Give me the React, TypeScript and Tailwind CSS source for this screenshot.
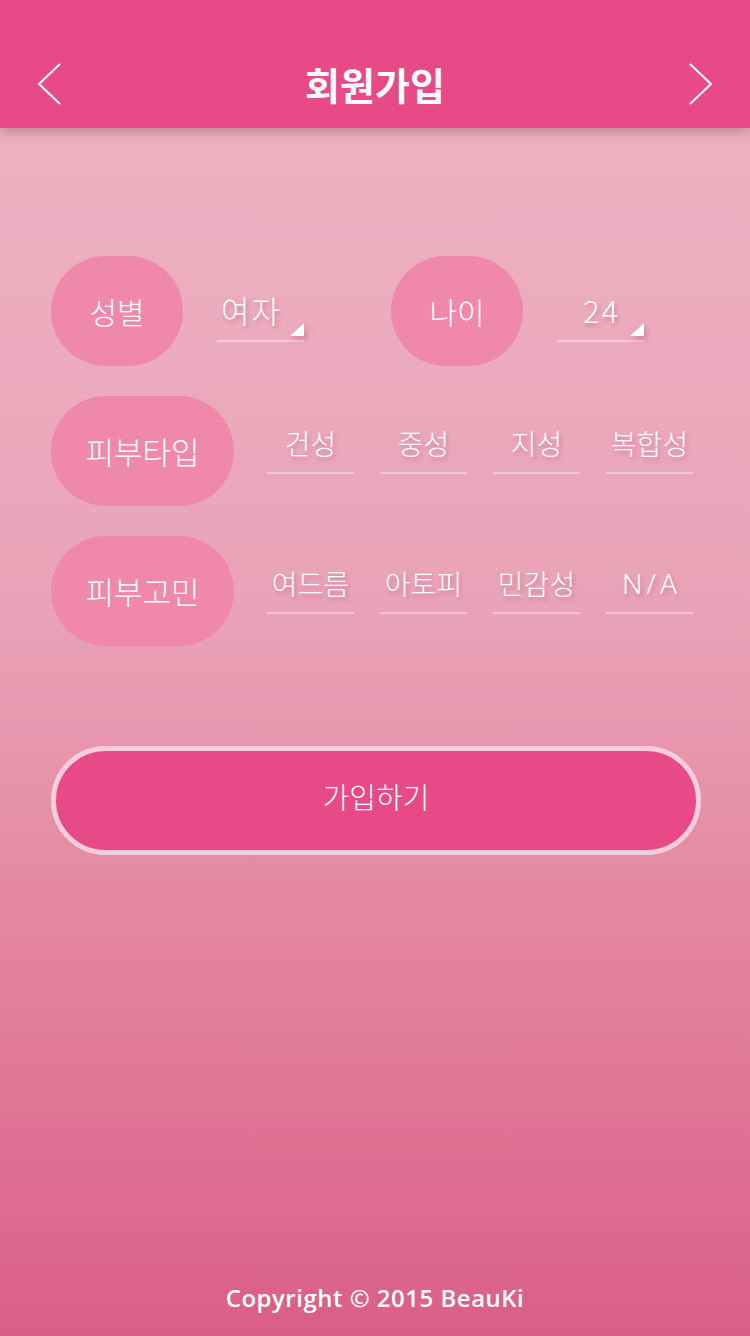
import React from "react";

const kr = "font-['Noto_Sans_CJK_KR','Noto_Sans',sans-serif]";
const shadowText = "[text-shadow:2px_3px_4px_rgba(190,70,110,0.45)]";

const Pill = ({ label, wide }: { label: string; wide?: boolean }) => (
  <div
    className={`${wide ? "w-[183px] text-[31px]" : "w-[132px] text-[30px]"} h-[110px] shrink-0 rounded-full bg-[#f088ac] flex items-center justify-center text-white font-light ${kr}`}
  >
    {label}
  </div>
);

const Select = ({ value, centered }: { value: string; centered?: boolean }) => (
  <div className="relative w-[87px] h-[86px] flex flex-col justify-end">
    <div
      className={`${centered ? "text-center pl-[2px]" : "text-left pl-[4px]"} text-white text-[31px] tracking-[2px] leading-[40px] mb-[10px] font-light ${shadowText} ${kr}`}
    >
      {value}
    </div>
    <div className="h-[2px] bg-white/40" />
    <svg
      className="absolute right-0 bottom-[6px] drop-shadow-[2px_3px_3px_rgba(190,70,110,0.5)]"
      width="14"
      height="13"
      viewBox="0 0 14 13"
    >
      <polygon points="14,0 14,13 0,13" fill="#fff" />
    </svg>
  </div>
);

const Option = ({ label, latin }: { label: string; latin?: boolean }) => (
  <div className="w-[87px] h-[78px] flex flex-col justify-end">
    <div
      className={`text-center text-white text-[28px] leading-[36px] mb-[11px] whitespace-nowrap ${shadowText} ${
        latin ? "font-['Noto_Sans',sans-serif] tracking-[4px] font-light pl-[4px]" : `font-light ${kr}`
      }`}
    >
      {label}
    </div>
    <div className="h-[2px] bg-white/40" />
  </div>
);

export default function App() {
  const skinTypes = ["건성", "중성", "지성", "복합성"];
  const concerns = ["여드름", "아토피", "민감성", "N/A"];

  return (
    <div className="w-[750px] min-h-[1336px] flex flex-col bg-gradient-to-b from-[#eeb5c5] via-[#e9a3b8] via-45% to-[#da5e87]">
      {/* Header */}
      <header className="relative z-10 h-[128px] bg-[#e84a88] shadow-[0_4px_12px_rgba(120,40,70,0.35)] flex items-center justify-between px-[37px] pt-[40px]">
        <svg width="24" height="42" viewBox="0 0 24 42" fill="none">
          <polyline points="23,1 2,21 23,41" stroke="#fff" strokeWidth="2" />
        </svg>
        <h1 className={`text-white text-[38px] font-bold leading-[44px] ${kr}`}>회원가입</h1>
        <svg width="24" height="42" viewBox="0 0 24 42" fill="none">
          <polyline points="1,1 22,21 1,41" stroke="#fff" strokeWidth="2" />
        </svg>
      </header>

      <main className="flex-1 flex flex-col px-[51px] pt-[128px]">
        {/* 성별 / 나이 */}
        <div className="flex items-start">
          <Pill label="성별" />
          <div className="ml-[34px]">
            <Select value="여자" />
          </div>
          <div className="ml-[87px]">
            <Pill label="나이" />
          </div>
          <div className="ml-[34px]">
            <Select value="24" centered />
          </div>
        </div>

        {/* 피부타입 */}
        <div className="flex items-start mt-[30px]">
          <Pill label="피부타입" wide />
          <div className="ml-[33px] flex gap-[26px]">
            {skinTypes.map((t) => (
              <Option key={t} label={t} />
            ))}
          </div>
        </div>

        {/* 피부고민 */}
        <div className="flex items-start mt-[30px]">
          <Pill label="피부고민" wide />
          <div className="ml-[33px] flex gap-[26px]">
            {concerns.map((t) => (
              <Option key={t} label={t} latin={t === "N/A"} />
            ))}
          </div>
        </div>

        <button
          className={`mt-[100px] w-[650px] h-[109px] pb-[8px] rounded-full border-[5px] border-[#f5cddb] bg-[#e84a88] text-white text-[29px] font-light ${kr}`}
        >
          가입하기
        </button>
      </main>

      <footer className="h-[76px] pt-[16px] flex items-start justify-center">
        <p className="text-white text-[24px] font-semibold tracking-[0.5px] font-['Open_Sans',sans-serif] leading-[44px]">
          Copyright © 2015 BeauKi
        </p>
      </footer>
    </div>
  );
}
